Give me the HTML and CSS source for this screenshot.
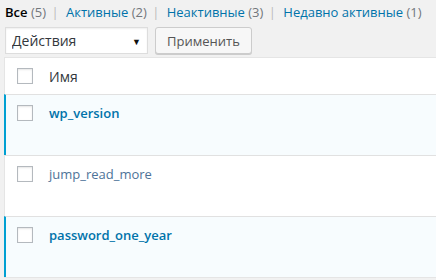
FILE: index.html
```html
<!DOCTYPE html>
<html lang="ru">
<head>
    <meta charset="UTF-8">
    <title>Плагины</title>
    <link rel="stylesheet" href="styles.css">
</head>
<body>
    <ul class="subsubsub">
        <li class="current">Все <span class="count">(5)</span></li>
        <li class="sep">|</li>
        <li><a href="#">Активные</a> <span class="count">(2)</span></li>
        <li class="sep">|</li>
        <li><a href="#">Неактивные</a> <span class="count">(3)</span></li>
        <li class="sep">|</li>
        <li><a href="#">Недавно активные</a> <span class="count">(1)</span></li>
    </ul>

    <div class="tablenav">
        <div class="select-wrap">
            <select class="bulk-select">
                <option>Действия</option>
            </select>
            <span class="select-arrow">▼</span>
        </div>
        <button class="button">Применить</button>
    </div>

    <div class="plugins">
        <div class="row head">
            <span class="check"></span>
            <span class="col-name">Имя</span>
        </div>
        <div class="row active">
            <span class="check"></span>
            <a class="plugin-title" href="#">wp_version</a>
        </div>
        <div class="row inactive">
            <span class="check"></span>
            <a class="plugin-title" href="#">jump_read_more</a>
        </div>
        <div class="row active">
            <span class="check"></span>
            <a class="plugin-title" href="#">password_one_year</a>
        </div>
    </div>
</body>
</html>
```

FILE: styles.css
```css
* {
    margin: 0;
    padding: 0;
    box-sizing: border-box;
}

body {
    font-family: 'Open Sans', 'Noto Sans', sans-serif;
    font-size: 13px;
    color: #444;
    background: #f1f1f1;
    overflow: hidden;
    width: 436px;
    height: 280px;
}

a {
    text-decoration: none;
}

/* Filter links */
.subsubsub {
    list-style: none;
    white-space: nowrap;
    padding: 3px 0 0 5px;
    height: 25px;
    line-height: 19px;
    color: #666;
}

.subsubsub li {
    display: inline;
}

.subsubsub a {
    color: #0073aa;
}

.subsubsub .current {
    color: #000;
    font-weight: 600;
}

.subsubsub .current .count {
    font-weight: 400;
}

.subsubsub .count {
    color: #72777c;
}

.subsubsub .sep {
    color: #bbb;
    margin: 0 4px 0 2px;
}

/* Bulk actions */
.tablenav {
    display: flex;
    gap: 7px;
    padding-left: 5px;
    height: 32px;
    padding-top: 2px;
}

.select-wrap {
    position: relative;
    width: 143px;
    height: 27px;
}

.bulk-select {
    appearance: none;
    -webkit-appearance: none;
    width: 100%;
    height: 100%;
    border: 1px solid #ddd;
    background: #fff;
    font-family: inherit;
    font-size: 14px;
    color: #32373c;
    padding: 0 6px;
    box-shadow: inset 0 1px 2px rgba(0,0,0,0.07);
}

.select-arrow {
    position: absolute;
    right: 7px;
    top: 8px;
    font-size: 9px;
    color: #111;
    pointer-events: none;
}

.button {
    height: 27px;
    padding: 0 11px;
    border: 1px solid #ccc;
    border-radius: 3px;
    background: #f7f7f7;
    color: #555;
    font-family: inherit;
    font-size: 13px;
    box-shadow: 0 1px 0 #ccc;
}

/* Plugin table */
.plugins {
    margin-left: 4px;
    width: 432px;
    background: #fff;
    border: 1px solid #e5e5e5;
    border-right: none;
}

.row {
    display: flex;
    align-items: flex-start;
    gap: 15px;
    padding: 10px 0 0 12px;
    height: 61px;
    border-top: 1px solid #e1e1e1;
}

.row.head {
    height: 36px;
    border-top: none;
    align-items: center;
    padding-top: 0;
}

.row.active {
    background: #f7fcfe;
    border-left: 2px solid #00a0d2;
    margin-left: -1px;
    padding-left: 11px;
}

.check {
    width: 16px;
    height: 16px;
    border: 1px solid #b4b9be;
    background: #fff;
    box-shadow: inset 0 1px 2px rgba(0,0,0,0.1);
    flex-shrink: 0;
}

.col-name {
    font-size: 14px;
    color: #32373c;
    padding-left: 1px;
}

.plugin-title {
    color: #0073aa;
    font-weight: 600;
    font-size: 13px;
    line-height: 17px;
    padding-left: 1px;
}

.inactive .plugin-title {
    color: #4e7398;
    font-weight: 400;
}
```
